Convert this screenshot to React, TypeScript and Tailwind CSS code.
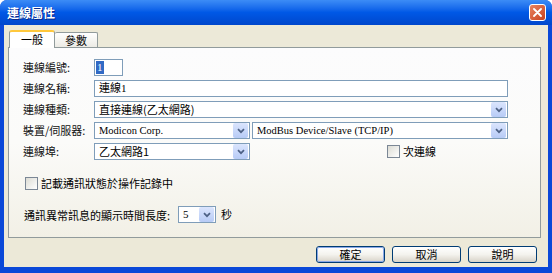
import React from "react";

const cjk = "font-['Noto_Sans_CJK_TC','Noto_Sans',sans-serif]";
const serif = "font-['Liberation_Serif','Noto_Sans_CJK_TC',serif]";

function Chevron() {
  return (
    <svg width="8" height="6" viewBox="0 0 8 6">
      <path d="M1 1.2 L4 4.2 L7 1.2" fill="none" stroke="#4d6185" strokeWidth="1.7" />
    </svg>
  );
}

function Select({ className, textClass, children }: { className: string; textClass: string; children: React.ReactNode }) {
  return (
    <div className={`flex h-[17px] items-center border border-[#7f9db9] bg-white ${className}`}>
      <div className={`flex-1 truncate pl-[4px] leading-[15px] text-black ${textClass}`}>{children}</div>
      <div className="mr-px flex h-[15px] w-[15px] items-center justify-center rounded-[2px] bg-gradient-to-b from-[#dbe5fd] to-[#b7cbf6]">
        <Chevron />
      </div>
    </div>
  );
}

function Label({ children }: { children: React.ReactNode }) {
  return <div className={`w-[71px] shrink-0 text-[11px] leading-[17px] text-[#111] ${cjk}`}>{children}</div>;
}

function Checkbox() {
  return <div className="h-[13px] w-[13px] shrink-0 border border-[#7b8795] bg-gradient-to-br from-[#dcdcd4] to-white" />;
}

function Button({ children, def }: { children: React.ReactNode; def?: boolean }) {
  return (
    <div className="h-[17px] w-[69px] rounded-[3px] border border-[#003c74] bg-gradient-to-b from-white via-[#f4f3ee] to-[#d8d3c8]">
      <div
        className={`flex h-full w-full items-center justify-center rounded-[2px] text-[11px] text-black ${cjk} ${
          def ? "border border-[#8aa8e6]" : ""
        }`}
      >
        {children}
      </div>
    </div>
  );
}

export default function App() {
  return (
    <div className="flex h-[273px] w-[552px] flex-col overflow-hidden rounded-t-[7px] bg-[#0a48d8]">
      {/* Title bar */}
      <div className="flex h-[25px] shrink-0 items-center justify-between bg-gradient-to-b from-[#3c8cf6] via-[#0058e6] to-[#0047cc] pl-[7px] pr-[6px]">
        <div className={`text-[12px] font-bold text-white [text-shadow:1px_1px_0_#0c2a8a] ${cjk}`}>連線屬性</div>
        <div className="flex h-[17px] w-[17px] items-center justify-center rounded-[3px] border border-white bg-gradient-to-br from-[#e8835f] to-[#c8401c]">
          <svg width="9" height="9" viewBox="0 0 9 9">
            <path d="M1 1 L8 8 M8 1 L1 8" stroke="white" strokeWidth="1.8" strokeLinecap="round" />
          </svg>
        </div>
      </div>
      {/* Body */}
      <div className="mx-[4px] mb-[6px] flex flex-1 flex-col bg-[#ece9d8] pl-[4px] pr-[7px] pt-[5px]">
        {/* Tabs */}
        <div className="flex h-[17px] items-end pl-px">
          <div className={`relative z-10 -mb-px flex h-[18px] w-[46px] items-start justify-center rounded-t-[3px] border-x border-[#919b9c] border-t-[2px] border-t-[#ffc83c] bg-white pt-px text-[11px] leading-[13px] text-black ${cjk}`}>
            一般
          </div>
          <div className={`flex h-[15px] w-[43px] items-center justify-center rounded-t-[2px] border-r border-t border-[#919b9c] bg-gradient-to-b from-white to-[#ecebe5] text-[11px] text-black ${cjk}`}>
            參數
          </div>
        </div>
        {/* Panel */}
        <div className="flex h-[191px] flex-col border border-[#919b9c] bg-gradient-to-b from-[#fcfcfd] via-[#fbfbf9] to-[#f2f0e6] pl-[14px] pr-[32px] pt-[11px]">
          <div className="flex flex-col gap-[4px]">
            <div className="flex items-center">
              <Label>連線編號:</Label>
              <div className="flex h-[17px] w-[29px] items-center border border-[#7f9db9] bg-white pl-px">
                <span className={`flex h-[13px] items-center bg-[#316ac5] px-[1px] text-[11px] text-white ${serif}`}>1</span>
              </div>
            </div>
            <div className="flex items-center">
              <Label>連線名稱:</Label>
              <div className={`flex h-[17px] flex-1 items-center border border-[#7f9db9] bg-white pl-[4px] text-[11px] text-black ${serif}`}>
                連線1
              </div>
            </div>
            <div className="flex items-center">
              <Label>連線種類:</Label>
              <Select className="flex-1" textClass={`text-[11px] ${cjk}`}>
                直接連線(乙太網路)
              </Select>
            </div>
            <div className="flex items-center">
              <Label>裝置/伺服器:</Label>
              <Select className="w-[156px]" textClass={`text-[10.5px] ${serif}`}>
                Modicon Corp.
              </Select>
              <Select className="ml-[2px] flex-1" textClass={`text-[10.5px] ${serif}`}>
                ModBus Device/Slave (TCP/IP)
              </Select>
            </div>
            <div className="flex items-center">
              <Label>連線埠:</Label>
              <Select className="w-[156px]" textClass={`text-[11px] ${cjk}`}>
                乙太網路1
              </Select>
              <div className="ml-[137px] flex items-center gap-[3px]">
                <Checkbox />
                <span className={`text-[11px] text-black ${cjk}`}>次連線</span>
              </div>
            </div>
          </div>
          <div className="ml-[2px] mt-[17px] flex h-[13px] items-center gap-[3px]">
            <Checkbox />
            <span className={`text-[11px] text-black ${cjk}`}>記載通訊狀態於操作記錄中</span>
          </div>
          <div className="ml-px mt-[16px] flex items-center">
            <span className={`w-[154px] text-[11px] leading-[16px] text-black ${cjk}`}>通訊異常訊息的顯示時間長度:</span>
            <Select className="w-[38px]" textClass={`text-[11px] ${serif}`}>
              5
            </Select>
            <span className={`ml-[5px] text-[11px] text-black ${cjk}`}>秒</span>
          </div>
        </div>
        {/* Buttons */}
        <div className="mt-[8px] flex justify-end gap-[7px] pr-[4px]">
          <Button def>確定</Button>
          <Button>取消</Button>
          <Button>說明</Button>
        </div>
      </div>
    </div>
  );
}
